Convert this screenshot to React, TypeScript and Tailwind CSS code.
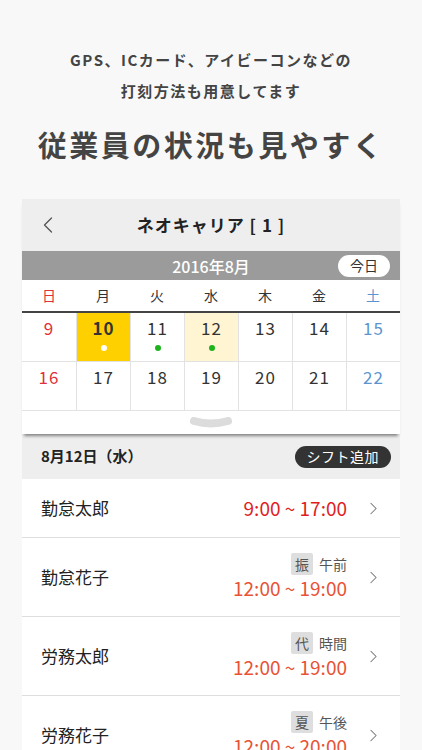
import { ChevronLeft, ChevronRight } from 'lucide-react';

const weekdays = ['日', '月', '火', '水', '木', '金', '土'];

type Day = { n: number; bg?: string; bold?: boolean; dot?: string };

const weeks: Day[][] = [
  [
    { n: 9 },
    { n: 10, bg: 'bg-[#ffd000]', bold: true, dot: 'bg-white' },
    { n: 11, dot: 'bg-[#1db31d]' },
    { n: 12, bg: 'bg-[#fff5d2]', dot: 'bg-[#1db31d]' },
    { n: 13 },
    { n: 14 },
    { n: 15 },
  ],
  [{ n: 16 }, { n: 17 }, { n: 18 }, { n: 19 }, { n: 20 }, { n: 21 }, { n: 22 }],
];

const shifts = [
  { name: '勤怠太郎', time: '9:00 ~ 17:00' },
  { name: '勤怠花子', tag: '振', kind: '午前', time: '12:00 ~ 19:00' },
  { name: '労務太郎', tag: '代', kind: '時間', time: '12:00 ~ 19:00' },
  { name: '労務花子', tag: '夏', kind: '午後', time: '12:00 ~ 20:00' },
];

function dayColor(i: number) {
  if (i === 0) return 'text-[#e0313a]';
  if (i === 6) return 'text-[#5b95cf]';
  return 'text-[#333]';
}

export default function App() {
  return (
    <div className="h-[750px] overflow-hidden bg-[#f8f8f8] font-['Noto_Sans_CJK_JP',sans-serif]">
      {/* キャッチコピー */}
      <div className="pt-[44px] text-center text-[#444]">
        <p className="text-[15px] font-bold leading-[31px] tracking-[1.5px]">
          GPS、ICカード、アイビーコンなどの
          <br />
          打刻方法も用意してます
        </p>
        <h1 className="mt-[20px] text-[29px] font-bold leading-[36px] tracking-[2.5px]">
          従業員の状況も見やすく
        </h1>
      </div>

      {/* 端末画面 */}
      <div className="mx-[22px] mt-[37px] bg-white">
        <div className="relative z-10 shadow-[0_4px_3px_-2px_rgba(0,0,0,0.45)]">
          <div className="relative flex h-[52px] items-center justify-center bg-[#eeeeee]">
            <ChevronLeft className="absolute left-[12px] h-[28px] w-[28px] text-[#555]" strokeWidth={1.1} />
            <span className="text-[17px] font-bold tracking-[1px] text-[#222]">ネオキャリア [ 1 ]</span>
          </div>

          <div className="relative flex h-[29px] items-center justify-center bg-[#9b9b9b]">
            <span className="text-[16px] font-medium text-white">2016年8月</span>
            <span className="absolute right-[10px] flex h-[22px] w-[52px] items-center justify-center rounded-full bg-white text-[14px] text-[#333]">
              今日
            </span>
          </div>

          <div className="grid h-[33px] grid-cols-7 border-b-2 border-[#444] text-[14px]">
            {weekdays.map((w, i) => (
              <div key={w} className={`flex items-center justify-center ${dayColor(i)}`}>
                {w}
              </div>
            ))}
          </div>

          {weeks.map((week, wi) => (
            <div key={wi} className="grid h-[49px] grid-cols-7 border-b border-[#e2e2e2]">
              {week.map((d, i) => (
                <div
                  key={d.n}
                  className={`flex flex-col items-center pt-[2px] ${i > 0 ? 'border-l border-[#e2e2e2]' : ''} ${d.bg ?? ''}`}
                >
                  <span className={`text-[17px] leading-[26px] tracking-[1px] ${dayColor(i)} ${d.bold ? 'font-bold' : ''}`}>
                    {d.n}
                  </span>
                  {d.dot && <span className={`mt-[4px] h-[6px] w-[6px] rounded-full ${d.dot}`} />}
                </div>
              ))}
            </div>
          ))}

          <div className="flex h-[23px] items-center justify-center">
            <svg width="46" height="12" viewBox="0 0 46 12">
              <path d="M6 4 Q23 9 40 4" stroke="#dcdcdc" strokeWidth="8" strokeLinecap="round" fill="none" />
            </svg>
          </div>
        </div>

        {/* 日付ヘッダー */}
        <div className="flex h-[45px] items-center justify-between bg-[#eeeeee] pl-[19px] pr-[9px]">
          <span className="text-[15px] font-bold text-[#222]">8月12日（水）</span>
          <span className="flex h-[22px] items-center rounded-full bg-[#333] px-[12px] text-[14px] tracking-[0.5px] text-white">
            シフト追加
          </span>
        </div>

        {/* シフト一覧 */}
        {shifts.map((s, i) => (
          <div
            key={s.name}
            className={`flex items-center border-b border-[#dedede] pl-[19px] pr-[16px] ${i === 0 ? 'h-[59px]' : 'h-[79px]'}`}
          >
            <span className="flex-1 text-[17px] text-[#222]">{s.name}</span>
            <div className="flex flex-col items-end">
              {s.tag && (
                <div className="flex items-center gap-[6px] text-[14px] text-[#555]">
                  <span className="flex h-[22px] w-[22px] items-center justify-center rounded-[2px] bg-[#dedede] text-[#555]">
                    {s.tag}
                  </span>
                  <span>{s.kind}</span>
                </div>
              )}
              <span className={`text-[19px] leading-[26px] ${i === 0 ? 'text-[#e01e1e]' : 'text-[#e85335]'}`}>{s.time}</span>
            </div>
            <ChevronRight className="ml-[16px] h-[21px] w-[21px] text-[#777]" strokeWidth={1.2} />
          </div>
        ))}
      </div>
    </div>
  );
}
